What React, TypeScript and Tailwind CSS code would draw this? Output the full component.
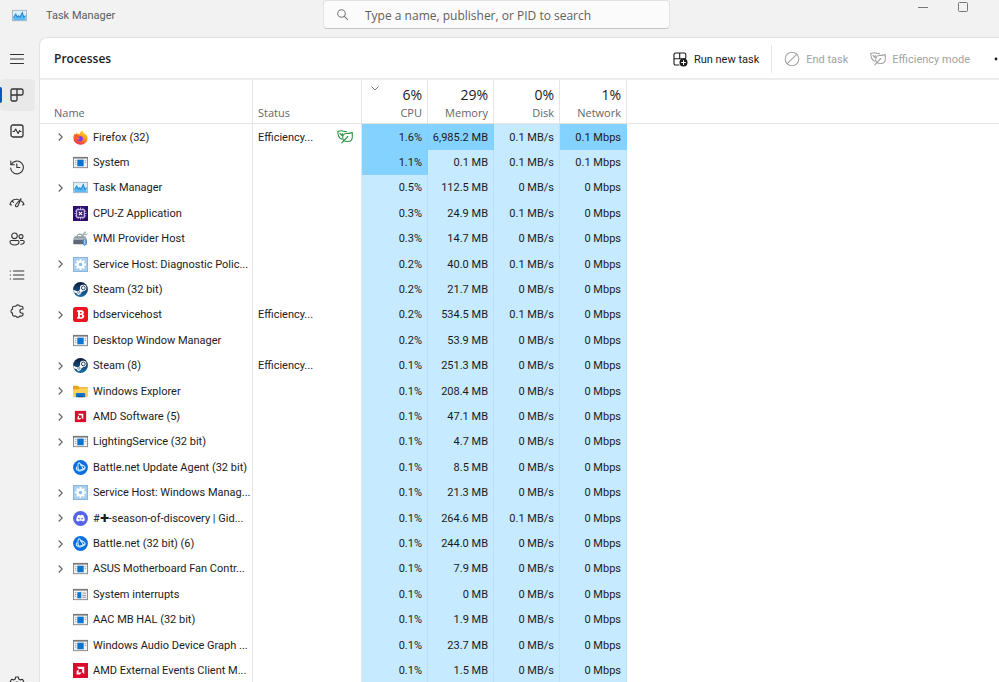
import type { ReactNode } from "react";
import clsx from "clsx";

type IconName =
  | "firefox"
  | "app"
  | "interrupts"
  | "taskmgr"
  | "cpuz"
  | "wmi"
  | "service"
  | "steam"
  | "bitdefender"
  | "explorer"
  | "amdSmall"
  | "amd"
  | "battlenet"
  | "discord";

type Process = {
  name: string;
  icon: IconName;
  expandable?: boolean;
  status?: string;
  leaf?: boolean;
  values: [string, string, string, string];
  hot?: number[];
};

const PROCESSES: Process[] = [
  { name: "Firefox (32)", icon: "firefox", expandable: true, status: "Efficiency...", leaf: true, values: ["1.6%", "6,985.2 MB", "0.1 MB/s", "0.1 Mbps"], hot: [0, 1, 3] },
  { name: "System", icon: "app", values: ["1.1%", "0.1 MB", "0.1 MB/s", "0.1 Mbps"], hot: [0] },
  { name: "Task Manager", icon: "taskmgr", expandable: true, values: ["0.5%", "112.5 MB", "0 MB/s", "0 Mbps"] },
  { name: "CPU-Z Application", icon: "cpuz", values: ["0.3%", "24.9 MB", "0.1 MB/s", "0 Mbps"] },
  { name: "WMI Provider Host", icon: "wmi", values: ["0.3%", "14.7 MB", "0 MB/s", "0 Mbps"] },
  { name: "Service Host: Diagnostic Polic...", icon: "service", expandable: true, values: ["0.2%", "40.0 MB", "0.1 MB/s", "0 Mbps"] },
  { name: "Steam (32 bit)", icon: "steam", values: ["0.2%", "21.7 MB", "0 MB/s", "0 Mbps"] },
  { name: "bdservicehost", icon: "bitdefender", expandable: true, status: "Efficiency...", values: ["0.2%", "534.5 MB", "0.1 MB/s", "0 Mbps"] },
  { name: "Desktop Window Manager", icon: "app", values: ["0.2%", "53.9 MB", "0 MB/s", "0 Mbps"] },
  { name: "Steam (8)", icon: "steam", expandable: true, status: "Efficiency...", values: ["0.1%", "251.3 MB", "0 MB/s", "0 Mbps"] },
  { name: "Windows Explorer", icon: "explorer", expandable: true, values: ["0.1%", "208.4 MB", "0 MB/s", "0 Mbps"] },
  { name: "AMD Software (5)", icon: "amdSmall", expandable: true, values: ["0.1%", "47.1 MB", "0 MB/s", "0 Mbps"] },
  { name: "LightingService (32 bit)", icon: "app", expandable: true, values: ["0.1%", "4.7 MB", "0 MB/s", "0 Mbps"] },
  { name: "Battle.net Update Agent (32 bit)", icon: "battlenet", values: ["0.1%", "8.5 MB", "0 MB/s", "0 Mbps"] },
  { name: "Service Host: Windows Manag...", icon: "service", expandable: true, values: ["0.1%", "21.3 MB", "0 MB/s", "0 Mbps"] },
  { name: "#✚-season-of-discovery | Gid...", icon: "discord", expandable: true, values: ["0.1%", "264.6 MB", "0.1 MB/s", "0 Mbps"] },
  { name: "Battle.net (32 bit) (6)", icon: "battlenet", expandable: true, values: ["0.1%", "244.0 MB", "0 MB/s", "0 Mbps"] },
  { name: "ASUS Motherboard Fan Contr...", icon: "app", expandable: true, values: ["0.1%", "7.9 MB", "0 MB/s", "0 Mbps"] },
  { name: "System interrupts", icon: "interrupts", values: ["0.1%", "0 MB", "0 MB/s", "0 Mbps"] },
  { name: "AAC MB HAL (32 bit)", icon: "app", values: ["0.1%", "1.9 MB", "0 MB/s", "0 Mbps"] },
  { name: "Windows Audio Device Graph ...", icon: "app", values: ["0.1%", "23.7 MB", "0 MB/s", "0 Mbps"] },
  { name: "AMD External Events Client M...", icon: "amd", values: ["0.1%", "1.5 MB", "0 MB/s", "0 Mbps"] },
];

const METRICS = [
  { label: "CPU", total: "6%", sorted: true },
  { label: "Memory", total: "29%" },
  { label: "Disk", total: "0%" },
  { label: "Network", total: "1%" },
];

const ICONS: Record<IconName, ReactNode> = {
  firefox: (
    <>
      <defs>
        <linearGradient id="fx" x1="0.8" y1="0" x2="0.3" y2="1">
          <stop offset="0" stopColor="#ffe03a" />
          <stop offset="0.45" stopColor="#ff9a1f" />
          <stop offset="1" stopColor="#f5254f" />
        </linearGradient>
      </defs>
      <path d="M9.3.4c1.4 1 2 2 2.2 3 .9.2 2 .9 2.600 1.600 1 1.100 1.500 2.500 1.500 4A7.400 7 0 0 1 8 15.800 7.500 7.300 0 0 1 .4 8.600c0-2 .6-3.800 1.700-5l.4 1.100c.5-.7 1.200-1.300 1.900-1.700l.2 1.200c1-.2 2-.1 2.700.2C7.400 2.900 8.300 1.500 9.300.4Z" fill="url(#fx)" />
      <path d="M5.200 7.300c1-1 3.300-1.300 4.600-.1 1.500 1.400 1.100 4-1 4.700-2 .6-4-.4-4.300-2.300.9.8 2.400.6 3-.2-.9-.2-2-.9-2.300-2.100Z" fill="#7b3ff2" />
      <path d="M1 5.600c.9-.9 2.700-1.300 4.400-.3L7.600 7c-.9.1-1.900.8-2.900.8-.5 1.400.1 2.500 1.300 3.200-2.600.2-4.500-2-5-5.400Z" fill="#ff5b2e" />
    </>
  ),
  app: (
    <>
      <rect x=".5" y="2.500" width="15" height="11" fill="#f2f2f2" stroke="#868686" />
      <path d="M0 3h16" stroke="#777" strokeWidth="1.600" />
      <rect x="4.600" y="5" width="6.800" height="7" fill="#0a74cf" />
      <path d="M2.200 6h1.400M2.200 8h1.400M2.200 10h1.400M12.500 6h1.500M12.500 8h1.500" stroke="#9a9a9a" strokeWidth=".9" />
    </>
  ),
  interrupts: (
    <>
      <rect x=".5" y="2.500" width="15" height="11" fill="#f2f2f2" stroke="#868686" />
      <path d="M0 3h16" stroke="#777" strokeWidth="1.600" />
      <rect x="4.600" y="5.500" width="4.200" height="6.500" fill="#0a74cf" />
      <path d="M2 6h1.400M2 8h1.400M2 10h1.400M10 6.500h4M10 9h4M10 11h4" stroke="#8a8a8a" strokeWidth=".9" />
    </>
  ),
  taskmgr: (
    <>
      <rect x=".5" y="2.500" width="15" height="11" fill="#d9effb" stroke="#a5b4bf" />
      <path d="M1.500 10.500 4 6.500l1.600 3.200 1.600-1.400 1.300 1.600L11 5l1.600 4.700 1.900-1.600V13h-13Z" fill="#5cb8f0" />
      <path d="M1.500 10.500 4 6.500l1.600 3.200 1.600-1.400 1.300 1.600L11 5l1.600 4.700 1.900-1.600" fill="none" stroke="#2389d6" strokeWidth="1.100" />
    </>
  ),
  cpuz: (
    <>
      <rect width="16" height="16" fill="#2d0f6b" />
      <path d="M5.500 2v2M8 1.500V4M10.500 2v2M5.500 12v2M8 12v2.500M10.500 12v2M2 5.500h2M1.500 8H4M2 10.500h2M12 5.500h2M12 8h2.500M12 10.500h2" stroke="#c4b0ee" />
      <rect x="4" y="4" width="8" height="8" fill="none" stroke="#e9e0ff" />
      <path d="m6.200 6.200 3.600 3.600m0-3.600L6.200 9.800" stroke="#fff" strokeWidth="1.300" />
    </>
  ),
  wmi: (
    <>
      <path d="M4.500 6V4.500l1.500-1h3.500" fill="none" stroke="#6f7b84" />
      <path d="M2 5.500h11l1.500 2.500v5.500H.5V8Z" fill="#8b98a3" />
      <path d="M.5 8h14v1.300H.5Z" fill="#c7d0d6" />
      <path d="M.5 9.300h14V14H.5Z" fill="#5d6a76" />
      <path d="m9 6 3.500-3.500" fill="none" stroke="#9ba5ac" strokeWidth="1.800" />
      <path d="M11 1.800c1-1.300 2.500-1.500 3.500-.800l-1.500 1.300 1 1 1.500-1.300c.4 1.500-.8 3-2.500 2.700Z" fill="#b3bbc1" />
      <path d="M10.500 9h4v5l-2 2-2-2Z" fill="#4f8fd0" />
      <path d="M12.500 9.500v5" stroke="#bfe0f8" />
    </>
  ),
  service: (
    <>
      <rect x=".5" y=".5" width="15" height="15" fill="#a9cff0" stroke="#88b3d8" />
      <path d="M8 2.200v11.600M2.200 8h11.600M3.900 3.900l8.200 8.200M12.100 3.900l-8.200 8.200" stroke="#fff" strokeWidth="1.900" />
      <circle cx="8" cy="8" r="4.200" fill="#fff" />
      <circle cx="8" cy="8" r="1.900" fill="#8abdea" />
    </>
  ),
  steam: (
    <>
      <defs>
        <linearGradient id="st" x1="0" y1="0" x2="0" y2="1">
          <stop offset="0" stopColor="#0b1b3c" />
          <stop offset="1" stopColor="#1a6ea8" />
        </linearGradient>
      </defs>
      <circle cx="8" cy="8" r="7.900" fill="url(#st)" />
      <path d="m.3 8.200 4.500 1.900c.5-.3 1-.4 1.500-.3L7.600 7.200A3.400 3.400 0 1 1 11 9.700L8.500 11.400a2.300 2.300 0 0 1-4.500.7L.9 10.900Z" fill="#fff" />
      <circle cx="11" cy="6.300" r="2" fill="#fff" stroke="#17345c" />
      <path d="m4.600 11.300 1.300.5c.7.300 1.400-.1 1.500-.8.100-.600-.300-1-.800-1.200" fill="none" stroke="#17345c" strokeWidth=".7" />
    </>
  ),
  bitdefender: (
    <>
      <rect width="16" height="16" rx="3" fill="#eb1420" />
      <path d="M4.300 3.500h4.500c2.900 0 3.700 2.900 1.800 4.200 2.400 1.200 1.600 4.800-1.500 4.800H4.300v-1.500l1-.4V5.400l-1-.4Zm3.200 1.700v1.800h1c1.300 0 1.300-1.800 0-1.800Zm0 3.400v2.200h1.200c1.500 0 1.500-2.200 0-2.200Z" fill="#fff" />
    </>
  ),
  explorer: (
    <>
      <path d="M0 3c0-.8.400-1.200 1.200-1.200h4l1.600 1.700h8c.8 0 1.200.400 1.200 1.200V7H0Z" fill="#e8a31c" />
      <path d="M0 5.500h6l1.400-1H16v8.300c0 .8-.4 1.200-1.200 1.200H1.200C.4 14 0 13.600 0 12.800Z" fill="#ffd257" />
      <path d="M3 14v-3c0-1 .5-1.500 1.500-1.500h7c1 0 1.500.5 1.500 1.500v3Z" fill="#1574c4" />
      <path d="M5.500 14v-1.500h5V14Z" fill="#0d4f91" />
    </>
  ),
  amdSmall: (
    <>
      <rect x="2" y="2" width="12" height="12" fill="#dc0a2c" />
      <path d="M5 5h6v6L9.300 9.300V6.700H6.700ZM4.800 8.600 6.400 7v2.600H9L7.400 11.200H4.800Z" fill="#fff" />
    </>
  ),
  amd: (
    <>
      <rect width="16" height="16" fill="#dc0a2c" />
      <path d="M4 4h8v8L9.700 9.700V6.300H6.300ZM3.800 8.800 6 6.600V10h3.400l-2.200 2.200H3.800Z" fill="#fff" />
    </>
  ),
  battlenet: (
    <>
      <circle cx="8" cy="8" r="7.900" fill="#0b6fe0" />
      <g fill="none" stroke="#d8f0ff" strokeWidth="1.100">
        <path d="M6.200 12C4.800 8 5 3.200 6.300 3c1.200-.1 3.700 3.700 4.700 7.500" />
        <path d="M4.400 7c-1.700 2.200-1 4 1.800 3.900 2.500-.1 5.200-1.200 6.800-2.700" />
        <path d="M7.500 5.200c3.200-.1 5.800 1.900 5.400 3.300-.4 1.400-3.200 2.900-6.200 3.600" />
      </g>
    </>
  ),
  discord: (
    <>
      <circle cx="8" cy="8" r="7.900" fill="#5662ea" />
      <path d="M5.100 4.400c.6-.3 1.100-.4 1.700-.5l.3.600h1.800l.3-.6c.6.100 1.100.2 1.700.5 1.200 1.700 1.700 3.600 1.600 5.700-.7.500-1.400.9-2.300 1.200l-.6-1H6.400l-.6 1c-.9-.3-1.600-.7-2.300-1.200-.1-2.100.4-4 1.600-5.700Z" fill="#fff" />
      <circle cx="6.400" cy="8.100" r=".9" fill="#5662ea" />
      <circle cx="9.600" cy="8.100" r=".9" fill="#5662ea" />
    </>
  ),
};

function ProcessIcon({ name }: { name: IconName }) {
  return (
    <svg viewBox="0 0 16 16" className="size-[15px] shrink-0" aria-hidden="true">
      {ICONS[name]}
    </svg>
  );
}

function LineIcon({ children, className = "size-4" }: { children: ReactNode; className?: string }) {
  return (
    <svg
      viewBox="0 0 16 16"
      fill="none"
      stroke="currentColor"
      strokeWidth="1.100"
      strokeLinecap="round"
      strokeLinejoin="round"
      className={clsx("shrink-0", className)}
      aria-hidden="true"
    >
      {children}
    </svg>
  );
}

// The two overlapping leaves used for efficiency mode
function Leaves({ className }: { className?: string }) {
  return (
    <LineIcon className={clsx("size-4", className)}>
      <path d="M5 10.300C2 9.300.7 7 .8 2.300c1.600.2 2.500-.5 3.800-.5 1.600 0 2.600.9 4.800.8" />
      <path d="M3 4.500 5.300 6.800V4.500" />
      <path d="M6.500 11.500C4.800 8.500 5.800 4.700 9 4.500c2 0 4-.3 6.300-.9v4.400c0 3-1.700 4.500-4.300 4.500-1.700 0-3.300-.3-4.500-1Z" />
      <path d="M4.800 13.800 10.800 7.500" />
    </LineIcon>
  );
}

const NAV: { label: string; icon: ReactNode; active?: boolean }[] = [
  { label: "Navigation", icon: <path d="M1.500 3.500h13M1.500 8h13M1.500 12.500h13" /> },
  {
    label: "Processes",
    active: true,
    icon: (
      <path d="M3.500 2h9A1.500 1.500 0 0 1 14 3.500V6.500A1.500 1.500 0 0 1 12.500 8H2M8 2v10.500A1.500 1.500 0 0 1 6.500 14h-3A1.500 1.500 0 0 1 2 12.500v-9A1.500 1.500 0 0 1 3.500 2" strokeWidth="1.300" />
    ),
  },
  {
    label: "Performance",
    icon: (
      <>
        <rect x="2" y="2" width="12" height="12" rx="2" strokeWidth="1.300" />
        <path d="M4 8.500h1.300L6.700 6l2.400 4.500 1.500-3 .6 1H12" />
      </>
    ),
  },
  {
    label: "App history",
    icon: (
      <>
        <path d="M2.300 5.500A6.400 6.400 0 1 1 1.600 9" />
        <path d="M1.800 2v3.700h3.700M7.800 4.800v3.700h3" />
      </>
    ),
  },
  {
    label: "Startup apps",
    icon: (
      <>
        <path d="M1 9.500c.8-3 3-5 6-5.200 1-.1 1.500 0 2.200.2M1 9.500l1.500.5M12.300 6c1.300.8 2.200 2 2.700 3.500l-1.500.5M3.500 6.300l1 1" />
        <path d="M12 3.700 6.800 9.500c-1.200 1.500.8 3.200 2 1.700Z" />
      </>
    ),
  },
  {
    label: "Users",
    icon: (
      <>
        <circle cx="5.500" cy="4.800" r="2.800" />
        <path d="M1 10.800c0-.8.5-1.300 1.300-1.300h6.400c.8 0 1.300.5 1.300 1.300 0 2-1.800 3.200-4.500 3.200S1 12.800 1 10.800Z" />
        <circle cx="12" cy="5.600" r="2" />
        <path d="M11.500 9.500h2.400c.8 0 1.300.5 1.300 1.200 0 1.600-1.300 2.500-3.400 2.500" />
      </>
    ),
  },
  {
    label: "Details",
    icon: <path d="M4.500 4h10.300M4.500 8h10.300M4.500 12h10.300M1.300 4h.2M1.300 8h.2M1.300 12h.2" strokeWidth="1.200" />,
  },
  {
    label: "Services",
    icon: (
      <path d="M14 6V4.700c0-.9-.6-1.500-1.500-1.500h-1.700a2.200 2.200 0 0 0-4 0H5c-.9 0-1.500.6-1.500 1.500v1.500a2 2 0 0 0 0 3.900v1.500c0 .9.600 1.500 1.500 1.500h1.800a2.200 2.200 0 0 0 4 0h1.700c.9 0 1.500-.6 1.500-1.500v-1.400h-1a2 2 0 0 1 0-4.200Z" />
    ),
  },
];

function TitleBar() {
  return (
    <header className="grid h-[37px] shrink-0 grid-cols-[1fr_347px_1fr] pr-[6px]">
      <div className="flex h-[30px] items-center gap-[19px] pl-3 text-[#5c5c5c]">
        <ProcessIcon name="taskmgr" />
        <h1 className="pt-[2px]">Task Manager</h1>
      </div>
      <label className="flex h-[29px] items-center gap-[17px] rounded-[4px] border border-[#e2e2e2] border-b-[#c6c6c6] bg-[#fbfbfb] pl-[13px]">
        <LineIcon className="size-[11px] text-[#777]">
          <circle cx="6.500" cy="6.500" r="5.500" strokeWidth="1.500" />
          <path d="m10.600 10.600 5 5" strokeWidth="1.500" />
        </LineIcon>
        <input
          type="text"
          aria-label="Search"
          placeholder="Type a name, publisher, or PID to search"
          className="min-w-0 flex-1 bg-transparent pt-[2px] font-['Open_Sans'] text-xs outline-none placeholder:text-[#606060]"
        />
      </label>
      <div className="flex h-[13px] justify-end pr-[10px] text-[#777]">
        <button type="button" aria-label="Minimize" className="grid w-10 place-items-center">
          <svg viewBox="0 0 10 10" className="size-[10px]" stroke="currentColor">
            <path d="M0 5.500h10" />
          </svg>
        </button>
        <button type="button" aria-label="Maximize" className="grid w-10 place-items-center">
          <svg viewBox="0 0 10 10" className="size-[10px]" fill="none" stroke="currentColor">
            <rect x=".5" y=".5" width="9" height="9" rx="1" />
          </svg>
        </button>
      </div>
    </header>
  );
}

function Sidebar() {
  return (
    <nav className="flex w-[39px] shrink-0 flex-col gap-1 pt-[6px] text-[#333]">
      {NAV.map((item) => (
        <button
          key={item.label}
          type="button"
          aria-label={item.label}
          className={clsx(
            "relative flex h-8 w-[35px] shrink-0 items-center rounded-[4px] pl-[9px]",
            item.active && "bg-[#e9e9e9]",
          )}
        >
          {item.active && <span className="absolute left-0 h-4 w-[2px] rounded-r-sm bg-[#0058c4]" />}
          <LineIcon>{item.icon}</LineIcon>
        </button>
      ))}
      <button type="button" aria-label="Settings" className="mt-auto flex h-[6px] w-[35px] items-start overflow-hidden pl-[9px]">
        <LineIcon>
          <path d="M6.700 1h2.600l.5 2 1.600.9 2-.6 1.300 2.300L13.200 7v2l1.500 1.400-1.300 2.300-2-.6-1.600.9-.5 2H6.700l-.5-2-1.600-.9-2 .6-1.300-2.300L2.800 9V7L1.300 5.600l1.300-2.300 2 .6L6.200 3Z" />
          <circle cx="8" cy="8" r="2" />
        </LineIcon>
      </button>
    </nav>
  );
}

function Toolbar() {
  return (
    <div className="flex h-[42px] shrink-0 items-center border-b-2 border-[#ececec] pt-[2px] pl-[14px]">
      <h2 className="flex-1 font-['Open_Sans'] text-xs font-semibold text-[#1b1b1b]">Processes</h2>
      <button type="button" className="flex items-center gap-[6px] text-[#1b1b1b]">
        <LineIcon>
          <path d="M7 14H3.500A1.500 1.500 0 0 1 2 12.500v-9A1.500 1.500 0 0 1 3.500 2h8.800a1.500 1.500 0 0 1 1.500 1.500V7M2 7.700h11.500M7.700 2v5.700" />
          <circle cx="11.500" cy="11.500" r="4" fill="currentColor" stroke="none" />
          <path d="M11.500 9.500v4M9.500 11.500h4" stroke="#fff" />
        </LineIcon>
        <span className="pt-[2px]">Run new task</span>
      </button>
      <span className="mx-3 h-7 w-px bg-[#e5e5e5]" />
      <button type="button" disabled className="flex items-center gap-[6px] text-[#a3a3a3]">
        <LineIcon>
          <circle cx="8" cy="8" r="6.800" />
          <path d="m3.300 12.700 9.400-9.400" />
        </LineIcon>
        <span className="pt-[2px]">End task</span>
      </button>
      <button type="button" disabled className="ml-[22px] flex items-center gap-[6px] text-[#a3a3a3]">
        <Leaves />
        <span className="pt-[2px]">Efficiency mode</span>
      </button>
      <button type="button" aria-label="More options" className="ml-6 flex w-[5px] overflow-hidden">
        <svg viewBox="0 0 16 4" className="h-1 w-4 shrink-0" fill="#1b1b1b">
          <circle cx="2" cy="2" r="1.400" />
          <circle cx="8" cy="2" r="1.400" />
          <circle cx="14" cy="2" r="1.400" />
        </svg>
      </button>
    </div>
  );
}

function ProcessTable() {
  return (
    <table className="w-full table-fixed border-separate border-spacing-0 text-[#1b1b1b]">
      <colgroup>
        <col className="w-[213px]" />
        <col className="w-[109px]" />
        <col className="w-[66px]" />
        <col className="w-[66px]" />
        <col className="w-[66px]" />
        <col className="w-[67px]" />
        <col />
      </colgroup>
      <thead>
        <tr className="h-11 font-['Open_Sans'] text-[#666]">
          <th className="border-r border-b border-[#e5e5e5] pb-[2px] pl-[14px] text-left align-bottom font-normal">Name</th>
          <th className="border-r border-b border-[#e5e5e5] pb-[2px] pl-[5px] text-left align-bottom font-normal">Status</th>
          {METRICS.map((metric) => (
            <th key={metric.label} className="relative border-r border-b border-[#e5e5e5] pr-[5px] pb-[2px] text-right align-bottom font-normal">
              {metric.sorted && (
                <svg viewBox="0 0 8 5" className="absolute top-[6px] left-[9px] h-[5px] w-2" fill="none" stroke="#777">
                  <path d="m.5.500 3.500 3.500L7.500.5" />
                </svg>
              )}
              <span className="block text-sm leading-5 text-[#1b1b1b]">{metric.total}</span>
              <span className="block leading-4">{metric.label}</span>
            </th>
          ))}
          <th className="border-b border-[#e5e5e5]" />
        </tr>
      </thead>
      <tbody>
        {PROCESSES.map((process) => (
          <tr key={process.name} className="h-[25px] nth-[5n+1]:h-[26px] nth-[5n+4]:h-[26px]">
            <td className="border-r border-[#e5e5e5] py-0 pl-3">
              <div className="flex h-4 items-center gap-[5px]">
                {process.expandable ? (
                  <button type="button" aria-label={`Expand ${process.name}`} className="grid size-4 shrink-0 place-items-center">
                    <svg viewBox="0 0 5 8" className="h-2 w-[5px]" fill="none" stroke="#666" strokeWidth="1.200">
                      <path d="m.7.500 3.500 3.500-3.500 3.500" />
                    </svg>
                  </button>
                ) : (
                  <span className="size-4 shrink-0" />
                )}
                <ProcessIcon name={process.icon} />
                <span className="pt-px whitespace-nowrap">{process.name}</span>
              </div>
            </td>
            <td className="border-r border-[#e5e5e5] py-0 pr-2 pl-[5px]">
              <div className="flex h-4 items-center justify-between">
                <span className="pt-px">{process.status}</span>
                {process.leaf && <Leaves className="text-[#2c9440]" />}
              </div>
            </td>
            {process.values.map((value, i) => (
              <td
                key={METRICS[i].label}
                className={clsx(
                  "border-r pt-px pr-[5px] pb-0 text-right whitespace-nowrap",
                  process.hot?.includes(i) ? "border-[#80d1ff] bg-[#84d2ff]" : "border-[#bbe1f6] bg-[#c6eaff]",
                )}
              >
                {value}
              </td>
            ))}
            <td />
          </tr>
        ))}
      </tbody>
    </table>
  );
}

export default function App() {
  return (
    <div className="flex h-screen flex-col overflow-hidden bg-[#f2f2f2] font-['Roboto','Open_Sans',sans-serif] text-[11px] leading-4">
      <TitleBar />
      <div className="flex min-h-0 flex-1">
        <Sidebar />
        <main className="flex min-w-0 flex-1 flex-col overflow-hidden rounded-tl-lg border-t border-l border-[#e2e2e2] bg-white">
          <Toolbar />
          <ProcessTable />
        </main>
      </div>
    </div>
  );
}
